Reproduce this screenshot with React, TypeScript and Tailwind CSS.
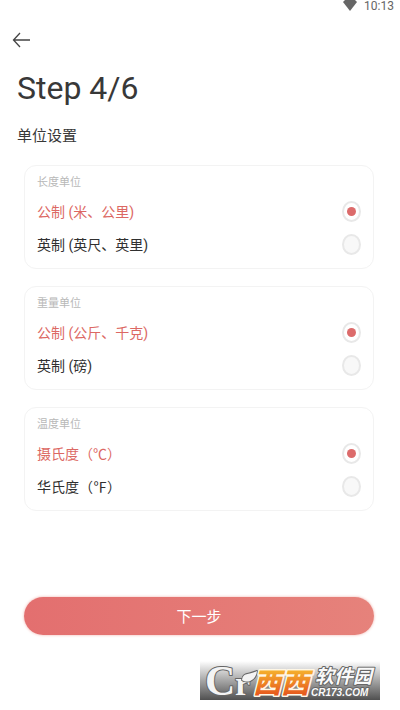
import { useState } from "react";

type Unit = { value: string; label: string };

const groups: { id: string; title: string; options: Unit[] }[] = [
  {
    id: "length",
    title: "长度单位",
    options: [
      { value: "metric", label: "公制 (米、公里)" },
      { value: "imperial", label: "英制 (英尺、英里)" },
    ],
  },
  {
    id: "weight",
    title: "重量单位",
    options: [
      { value: "metric", label: "公制 (公斤、千克)" },
      { value: "imperial", label: "英制 (磅)" },
    ],
  },
  {
    id: "temperature",
    title: "温度单位",
    options: [
      { value: "celsius", label: "摄氏度（℃）" },
      { value: "fahrenheit", label: "华氏度（℉）" },
    ],
  },
];

function StatusBar() {
  return (
    <div className="flex h-5 items-start justify-end gap-1.5 pr-1.5 text-[#666]">
      <svg className="h-3 w-4" viewBox="0 0 16 12" fill="currentColor" aria-hidden="true">
        <path d="M1 2L3 0H13L15 2L8 11Z" />
      </svg>
      <span className="text-xs leading-3">10:13</span>
    </div>
  );
}

function UnitCard({ id, title, options }: (typeof groups)[number]) {
  const [selected, setSelected] = useState(options[0].value);

  return (
    <fieldset className="rounded-xl border border-[#f3f3f3] px-3 pb-[7px]">
      <legend className="float-left h-[29px] w-full pt-2 text-[11px] leading-[18px] text-[#b8b8b8]">{title}</legend>
      {options.map((option) => (
        <label
          key={option.value}
          className="clear-both flex h-[33px] items-center justify-between text-sm text-[#303030] has-checked:text-[#dc6863]"
        >
          {option.label}
          <input
            type="radio"
            name={id}
            checked={selected === option.value}
            onChange={() => setSelected(option.value)}
            className="grid h-[21px] w-[19px] appearance-none place-items-center rounded-[50%] border-2 border-[#e8e8e8] bg-[#f8f8f8] before:h-[9px] before:w-[9px] before:rounded-full checked:bg-white checked:before:bg-[#dc6b6b]"
          />
        </label>
      ))}
    </fieldset>
  );
}

function SiteBadge() {
  return (
    <svg className="mr-5 h-[39px] w-[180px]" viewBox="0 0 180 39" role="img" aria-label="西西软件园 CR173.COM">
      <defs>
        <linearGradient id="badge-bg" x1="0" y1="0" x2="0" y2="1">
          <stop offset="0" stopColor="#fff" />
          <stop offset="0.5" stopColor="#a6a6a6" />
          <stop offset="1" stopColor="#505050" />
        </linearGradient>
        <linearGradient id="badge-orange" x1="0" y1="0" x2="0" y2="1">
          <stop offset="0.2" stopColor="#f6b52e" />
          <stop offset="0.9" stopColor="#e5501c" />
        </linearGradient>
      </defs>
      <rect width="180" height="39" fill="url(#badge-bg)" />
      <g
        fill="#f4f4f4"
        stroke="#666"
        strokeWidth="2"
        paintOrder="stroke"
        strokeLinejoin="round"
        className="font-['Liberation_Serif',serif] font-bold"
      >
        <text x="5" y="34" fontSize="42">C</text>
        <text x="35" y="34" fontSize="34">r</text>
        <path d="M42 19C43 11 49 14 57 10C56 19 48 23 42 19Z" />
      </g>
      <text
        x="53"
        y="32"
        fontSize="28"
        fill="url(#badge-orange)"
        stroke="#fff7e6"
        strokeWidth="3"
        paintOrder="stroke"
        strokeLinejoin="round"
        className="font-['Noto_Sans_CJK_SC',sans-serif] font-black italic"
      >
        西西
      </text>
      <g fill="#fafafa" stroke="#666" strokeWidth="2" paintOrder="stroke" strokeLinejoin="round" className="font-bold italic">
        <text x="115" y="22" fontSize="19" className="font-['Noto_Sans_CJK_SC',sans-serif]">软件园</text>
        <text x="111" y="35" fontSize="10" className="font-['Liberation_Sans',sans-serif]">CR173.COM</text>
      </g>
    </svg>
  );
}

export default function App() {
  return (
    <div className="flex min-h-screen flex-col bg-white font-['Roboto','Noto_Sans_CJK_SC',sans-serif] text-[#383838]">
      <StatusBar />
      <header className="px-3 pt-3">
        <button type="button" aria-label="返回" className="block">
          <svg className="h-4 w-5" viewBox="0 0 20 16" fill="none" stroke="#444" strokeWidth="1.3" aria-hidden="true">
            <path d="M18 8H2M8 1L1.5 8L8 15" />
          </svg>
        </button>
      </header>
      <h1 className="px-[17px] pt-5 text-[32px] leading-10">Step 4/6</h1>
      <h2 className="px-[17px] pt-4 text-[15px] leading-6">单位设置</h2>
      <form className="pt-[17px] pr-[26px] pl-6" onSubmit={(e) => e.preventDefault()}>
        <div className="flex flex-col gap-[17px]">
          {groups.map((group) => (
            <UnitCard key={group.id} {...group} />
          ))}
        </div>
        <button
          type="submit"
          className="mt-[86px] h-[38px] w-full rounded-full bg-linear-to-r from-[#e36f6f] to-[#e6827b] pt-0.5 text-[15px] text-white shadow-[0_0_3px_#f0b0aa]"
        >
          下一步
        </button>
      </form>
      <footer className="flex justify-end pt-[26px] pb-2.5">
        <SiteBadge />
      </footer>
    </div>
  );
}
